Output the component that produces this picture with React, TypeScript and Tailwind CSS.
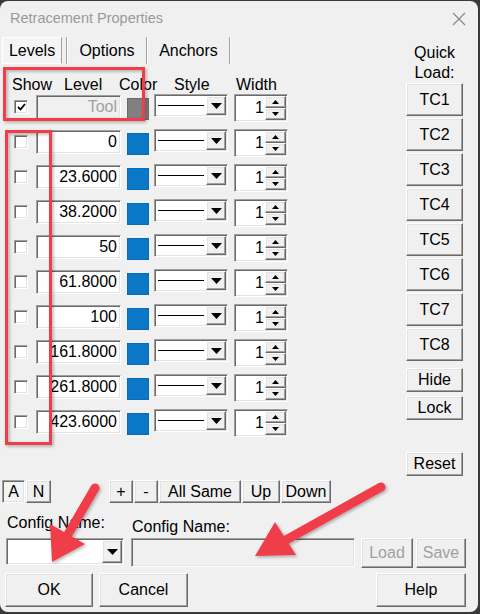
import React from "react";

const font = "font-['Liberation_Sans',Arial,sans-serif]";
const sunken =
  "border border-t-[#a0a0a0] border-l-[#a0a0a0] border-r-white border-b-white shadow-[inset_1px_1px_0_#696969,inset_-1px_-1px_0_#e3e3e3]";
const raised =
  "border border-t-white border-l-white border-r-[#696969] border-b-[#696969] shadow-[inset_-1px_-1px_0_#a0a0a0,inset_1px_1px_0_#e3e3e3] bg-[#f0f0f0]";

const levels = ["0", "23.6000", "38.2000", "50", "61.8000", "100", "161.8000", "261.8000", "423.6000"];

function DownArrow() {
  return (
    <svg width="11" height="6" viewBox="0 0 11 6">
      <path d="M0 0 H11 L5.5 6 Z" fill="#000" />
    </svg>
  );
}

function Combo({ w, h, line }: { w: string; h: string; line?: boolean }) {
  return (
    <div className={`${sunken} ${w} ${h} bg-white flex items-stretch p-[1px]`}>
      <div className="flex-1 flex items-center pl-[2px] pr-[2px]">
        {line && <div className="h-[1px] w-full bg-black" />}
      </div>
      <div className={`${raised} w-[20px] flex items-center justify-center`}>
        <DownArrow />
      </div>
    </div>
  );
}

function Spinner() {
  return (
    <div className={`${sunken} w-[54px] h-[28px] bg-white flex items-stretch p-[1px]`}>
      <div className="flex-1 flex items-center justify-end pr-[1px] text-[16px] leading-none">1</div>
      <div className="w-[21px] flex flex-col">
        <div className={`${raised} flex-1 flex items-center justify-center`}>
          <svg width="7" height="4" viewBox="0 0 7 4">
            <path d="M0 4 H7 L3.5 0 Z" fill="#000" />
          </svg>
        </div>
        <div className={`${raised} flex-1 flex items-center justify-center`}>
          <svg width="7" height="4" viewBox="0 0 7 4">
            <path d="M0 0 H7 L3.5 4 Z" fill="#000" />
          </svg>
        </div>
      </div>
    </div>
  );
}

function LevelRow({ value, tool }: { value: string; tool?: boolean }) {
  return (
    <div className="h-[28px] mb-[7px] flex items-start pl-[14px]">
      <div className={`${sunken} mt-[6px] w-[14px] h-[14px] bg-white flex items-center justify-center`}>
        {tool && (
          <svg width="9" height="8" viewBox="0 0 9 8">
            <path d="M1 4 L3.5 6.5 L8 1" stroke="#000" strokeWidth="1.8" fill="none" />
          </svg>
        )}
      </div>
      <div
        className={`${sunken} ml-[8px] mt-[1px] w-[85px] h-[24px] flex items-center justify-end pr-[3px] text-[16px] ${
          tool ? "bg-[#f0f0f0] text-[#a0a0a0]" : "bg-white text-black"
        }`}
      >
        {tool ? "Tool" : value}
      </div>
      <div
        className={`ml-[6px] mt-[4px] w-[22px] h-[22px] border ${
          tool ? "bg-[#808080] border-[#6a6a6a]" : "bg-[#0a78c6] border-[#0a6cb4]"
        }`}
      />
      <div className="ml-[5px]">
        <Combo w="w-[74px]" h="h-[23px]" line />
      </div>
      <div className="ml-[6px]">
        <Spinner />
      </div>
    </div>
  );
}

function Btn({ label, cls, disabled }: { label: string; cls: string; disabled?: boolean }) {
  return (
    <div
      className={`${raised} ${cls} flex items-center justify-center text-[16px] ${
        disabled ? "text-[#a0a0a0]" : "text-black"
      }`}
    >
      {label}
    </div>
  );
}

function Annotations() {
  return (
    <svg className="absolute inset-0 pointer-events-none" width="480" height="614" viewBox="0 0 480 614">
      <defs>
        <filter id="shade" x="-20%" y="-20%" width="140%" height="140%">
          <feDropShadow dx="1.5" dy="1.5" stdDeviation="1.5" floodColor="#000" floodOpacity="0.3" />
        </filter>
      </defs>
      <g filter="url(#shade)" fill="none" stroke="#ef3e4a" strokeWidth="3">
        <rect x="4.5" y="68.5" width="139" height="51" />
        <rect x="6.5" y="131.5" width="44" height="312" />
      </g>
      <g filter="url(#shade)" fill="#ef3e4a">
        <line x1="95" y1="488" x2="67" y2="536" stroke="#ef3e4a" strokeWidth="9" strokeLinecap="round" />
        <polygon points="52,562 50,524 85,544" />
        <line x1="381" y1="487" x2="286" y2="540" stroke="#ef3e4a" strokeWidth="9" strokeLinecap="round" />
        <polygon points="255,556 275,522 296,555" />
      </g>
    </svg>
  );
}

export default function App() {
  return (
    <div className={`relative w-[480px] h-[614px] bg-[#3a3a3a] overflow-hidden ${font}`}>
      <div className="mt-[1px] w-[478px] h-[611px] rounded-[8px] bg-[#f0f0f0] flex flex-col overflow-hidden">
        {/* Title bar */}
        <div className="h-[36px] flex items-center justify-between pl-[10px] pr-[12px]">
          <span className="text-[14.5px] text-[#9a9a9a]">Retracement Properties</span>
          <svg width="14" height="14" viewBox="0 0 14 14">
            <path d="M1 1 L13 13 M13 1 L1 13" stroke="#8a8a8a" strokeWidth="1.2" />
          </svg>
        </div>

        <div className="h-[440px] flex">
          {/* Levels grid */}
          <div className="w-[406px] flex flex-col">
            <div className="h-[27px] flex items-stretch pl-[2px] text-[16px]">
              <div className="w-[60px] border border-t-white border-l-white border-r-[#a0a0a0] border-b-white bg-[#f4f4f4] flex items-center justify-center">
                Levels
              </div>
              <div className="ml-[4px] w-[2px] border-l border-l-[#a0a0a0] border-r border-r-white" />
              <div className="w-[78px] flex items-center justify-center">Options</div>
              <div className="w-[2px] border-l border-l-[#a0a0a0] border-r border-r-white" />
              <div className="w-[81px] flex items-center justify-center">Anchors</div>
              <div className="w-[2px] border-l border-l-[#a0a0a0] border-r border-r-white" />
            </div>

            <div className="h-[30px] pt-[12px] pl-[12px] flex text-[16px] leading-[18px]">
              <span className="w-[52px]">Show</span>
              <span className="w-[55px]">Level</span>
              <span className="w-[55px]">Color</span>
              <span className="w-[62px]">Style</span>
              <span>Width</span>
            </div>

            <LevelRow value="Tool" tool />
            {levels.map((v) => (
              <LevelRow key={v} value={v} />
            ))}
          </div>

          {/* Quick load column */}
          <div className="w-[57px] flex flex-col pt-[6px]">
            <div className="h-[40px] text-center text-[16px] leading-[20px]">
              Quick
              <br />
              Load:
            </div>
            {["TC1", "TC2", "TC3", "TC4", "TC5", "TC6", "TC7", "TC8"].map((t, i) => (
              <Btn key={t} label={t} cls={`h-[33px] ${i > 0 ? "mt-[2px]" : ""}`} />
            ))}
            <Btn label="Hide" cls="h-[24px] mt-[7px]" />
            <Btn label="Lock" cls="h-[24px] mt-[4px]" />
            <Btn label="Reset" cls="h-[24px] mt-[32px]" />
          </div>
        </div>

        {/* Level tool buttons */}
        <div className="mt-[3px] h-[23px] flex pl-[2px]">
          <div className={`${sunken} w-[23px] bg-[#f4f4f4] flex items-center justify-center text-[16px]`}>A</div>
          <Btn label="N" cls="ml-[1px] w-[25px]" />
          <Btn label="+" cls="ml-[58px] w-[24px]" />
          <Btn label="-" cls="ml-[1px] w-[24px]" />
          <Btn label="All Same" cls="ml-[1px] w-[82px]" />
          <Btn label="Up" cls="ml-[1px] w-[38px]" />
          <Btn label="Down" cls="ml-[1px] w-[50px]" />
        </div>

        {/* Config */}
        <div className="h-[70px] flex items-start text-[16px] leading-[18px]">
          <div className="ml-[6px] w-[118px] flex flex-col">
            <span className="mt-[11px] pl-[1px]">Config Name:</span>
            <div className="mt-[6px]">
              <Combo w="w-[118px]" h="h-[27px]" />
            </div>
          </div>
          <div className="ml-[7px] w-[224px] flex flex-col">
            <span className="mt-[15px] pl-[1px]">Config Name:</span>
            <div className={`${sunken} mt-[2px] h-[29px] bg-[#f0f0f0]`} />
          </div>
          <Btn label="Load" cls="ml-[6px] mt-[35px] w-[52px] h-[30px]" disabled />
          <Btn label="Save" cls="ml-[3px] mt-[35px] w-[50px] h-[30px]" disabled />
        </div>

        {/* Dialog buttons */}
        <div className="h-[34px] flex pl-[5px]">
          <Btn label="OK" cls="w-[88px]" />
          <Btn label="Cancel" cls="ml-[6px] w-[89px]" />
          <Btn label="Help" cls="ml-[188px] w-[90px]" />
        </div>
      </div>
      <Annotations />
    </div>
  );
}
